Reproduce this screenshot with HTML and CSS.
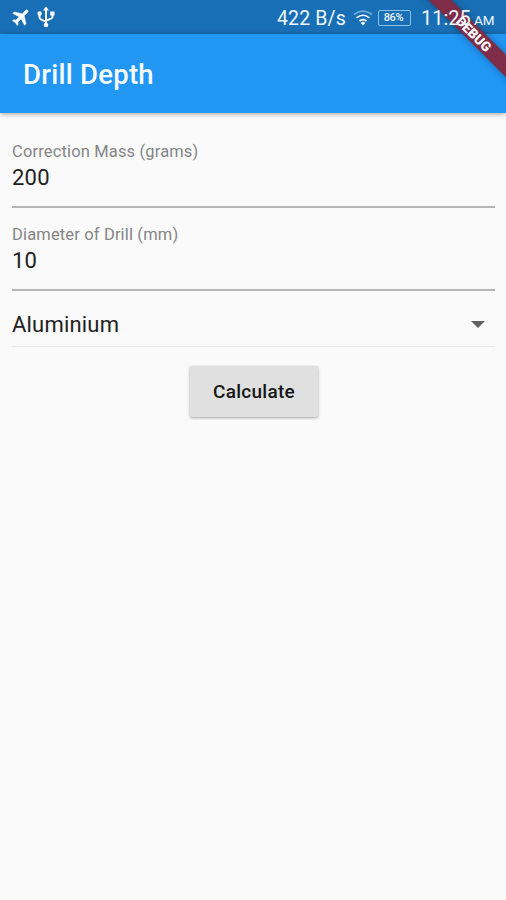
FILE: index.html
```html
<!DOCTYPE html>
<html lang="en">
<head>
<meta charset="utf-8">
<title>Drill Depth</title>
<link rel="stylesheet" href="styles.css">
</head>
<body>
<div class="corner"><div class="debug">DEBUG</div></div>
<div class="status">
  <svg class="plane" viewBox="0 0 24 24"><path transform="rotate(45 12 12)" fill="#fff" stroke="#fff" stroke-width=".7" d="M21.5 16.500v-2.200l-8-5V3.500a1.500 1.500 0 0 0-3 0v5.800l-8 5v2.200l8-2.500v5.500l-2.200 1.600v1.600l3.700-1 3.700 1v-1.600l-2.200-1.600V14z"/></svg>
  <svg class="usb" viewBox="0 0 18 22"><g fill="none" stroke="#fff" stroke-width="2"><path d="M9 3v15M2.500 8v3.500Q2.500 13.500 9 15.500M15.500 8v3Q15.500 12.500 9 14.500"/></g><g fill="#fff"><path d="M6 4.500 9 .5l3 4zM13.200 5.500h4.300v4h-4.300z"/><circle cx="2.600" cy="7.500" r="2.200"/><circle cx="9" cy="19" r="2.300"/></g></svg>
  <span class="rate">422 B/s</span>
  <svg class="wifi" viewBox="0 0 20 16"><g fill="none" stroke="#fff" stroke-width="1.600"><path stroke="#70aedc" d="M.8 4.500Q10-2.200 19.200 4.500"/><path d="M3.500 7.800Q10 2.800 16.500 7.800M6.500 11Q10 8.300 13.500 11"/></g><path fill="#fff" d="m7.700 12.800 2.300-1 2.300 1-2.300 2.700z"/></svg>
  <span class="battery">86%</span>
  <span class="clock">11:25</span><span class="ampm">AM</span>
</div>
<header class="appbar"><h1>Drill Depth</h1></header>
<main>
  <div class="field"><label>Correction Mass (grams)</label><div class="value">200</div></div>
  <div class="field second"><label>Diameter of Drill (mm)</label><div class="value">10</div></div>
  <div class="select"><span>Aluminium</span><svg viewBox="0 0 14 7"><path fill="#616161" d="M0 0h14L7 7z"/></svg></div>
  <button>Calculate</button>
</main>
</body>
</html>
```
FILE: styles.css
```css
* { box-sizing: border-box; }
body {
  margin: 0;
  height: 900px;
  position: relative;
  overflow: hidden;
  background: #fafafa;
  color: #212121;
  font-family: Roboto, sans-serif;
}
.status {
  height: 34px;
  background: #196fb6;
  display: flex;
  align-items: center;
  padding: 2px 11px 0 11px;
  color: #eef7ff;
}
.plane { width: 21px; height: 21px; margin-top: -3px; }
.usb { width: 18px; height: 22px; margin: -2px 0 0 5px; }
.rate, .clock, .ampm, .battery { white-space: nowrap; position: relative; z-index: 2; }
.rate { margin-left: auto; font-size: 19.5px; width: 68px; letter-spacing: .15px; }
.wifi { width: 20px; height: 16px; margin-left: 8px; }
.battery {
  width: 33px;
  height: 16px;
  margin: -1px 0 0 5px;
  padding-right: 2px;
  border: 1.500px solid #8dc2e8;
  border-radius: 2px;
  font-size: 11px;
  font-weight: 500;
  letter-spacing: -.3px;
  line-height: 14px;
  text-align: center;
}
.clock { width: 49px; margin-left: 10px; font-size: 20px; }
.ampm { width: 21px; margin-left: 4px; font-size: 13.5px; padding-top: 3px; }
.corner {
  position: absolute;
  z-index: 1;
  top: 0;
  right: 0;
  width: 106px;
  height: 106px;
  overflow: hidden;
}
.debug {
  position: absolute;
  left: -1px;
  top: 26px;
  width: 150px;
  height: 16px;
  transform: rotate(45deg);
  background: #7e2c48;
  box-shadow: 0 0 6px rgba(0, 0, 0, .35);
  color: #fff;
  font-size: 13.5px;
  font-weight: 900;
  line-height: 16px;
  text-align: center;
}
.appbar {
  height: 79px;
  padding: 0 23px;
  display: flex;
  align-items: center;
  background: #2196f3;
  box-shadow: 0 1px 5px rgba(0, 0, 0, .35);
}
h1 { margin: 3px 0 0; color: #f5fbff; font-size: 27.5px; line-height: 32px; font-weight: 500; letter-spacing: .25px; }
main { padding: 28px 11px 0 12px; display: flex; flex-direction: column; }
.field { height: 67px; border-bottom: 2px solid #b5b5b5; }
.second { margin-top: 16px; }
label { display: block; height: 21px; line-height: 21px; font-size: 16.5px; color: #858585; letter-spacing: .15px; }
.value { font-size: 22px; line-height: 32px; letter-spacing: .2px; }
.select {
  height: 56px;
  padding: 12px 10px 0 0;
  display: flex;
  justify-content: space-between;
  align-items: center;
  border-bottom: 1px solid #e8e8e8;
  font-size: 22px;
  letter-spacing: .2px;
}
.select svg { width: 14px; height: 7px; }
button {
  align-self: center;
  width: 128px;
  height: 51px;
  margin: 19px 0 0 1px;
  padding: 0;
  border: 0;
  border-radius: 2px;
  background: #e0e0e0;
  box-shadow: 0 1px 3px rgba(0, 0, 0, .35);
  color: #171717;
  font: 500 19px Roboto, sans-serif;
  letter-spacing: .25px;
}
```
